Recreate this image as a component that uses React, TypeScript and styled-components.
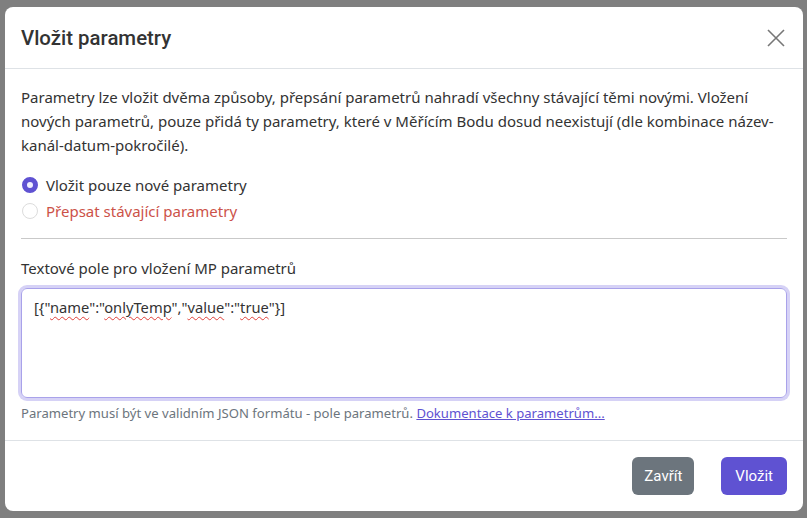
import React from 'react'
import styled, { createGlobalStyle } from 'styled-components'

const GlobalStyle = createGlobalStyle`
  html, body {
    margin: 0;
    padding: 0;
    height: 100%;
  }
  body {
    background: #808080;
    font-family: "Noto Sans", "Open Sans", sans-serif;
    color: #333;
  }
`

const Backdrop = styled.div`
  width: 807px;
  height: 518px;
  box-sizing: border-box;
  padding: 7px 4px 7px 5px;
  background: #7f7f7f;
`

const Modal = styled.div`
  height: 504px;
  box-sizing: border-box;
  background: #fff;
  border-radius: 8px;
  display: flex;
  flex-direction: column;
  overflow: hidden;
`

const Header = styled.div`
  height: 62px;
  box-sizing: border-box;
  display: flex;
  align-items: center;
  justify-content: space-between;
  padding: 0 14px 0 16px;
  border-bottom: 1px solid #dee2e6;
`

const Title = styled.h5`
  margin: 0;
  font-family: Roboto, "Noto Sans", sans-serif;
  font-size: 20.4px;
  font-weight: 500;
  color: #333;
`

const CloseButton = styled.button`
  border: none;
  background: transparent;
  padding: 4px;
  display: flex;
  cursor: pointer;
`

const Body = styled.div`
  padding: 16px 16px 0 16px;
  flex: 1;
`

const Intro = styled.p`
  margin: 0 0 15px 0;
  font-size: 15px;
  line-height: 24px;
  color: #333;
`

const RadioRow = styled.label<{ $danger?: boolean }>`
  display: flex;
  align-items: center;
  gap: 8px;
  height: 26px;
  font-size: 15px;
  color: ${p => (p.$danger ? '#cc5249' : '#333')};
  cursor: pointer;
`

const RadioDot = styled.span<{ $checked?: boolean }>`
  width: 16px;
  height: 16px;
  box-sizing: border-box;
  border-radius: 50%;
  margin-left: 1px;
  border: ${p => (p.$checked ? '5px solid #5f52d2' : '1px solid #dcdcdc')};
  background: ${p => (p.$checked ? '#f0efff' : '#fff')};
`

const Divider = styled.hr`
  border: none;
  border-top: 1px solid #c9c9c9;
  margin: 14px 0 17px 0;
`

const FieldLabel = styled.div`
  font-size: 15px;
  line-height: 24px;
  margin-bottom: 8px;
  color: #333;
`

const TextArea = styled.textarea`
  display: block;
  width: 100%;
  height: 110px;
  box-sizing: border-box;
  border: 1px solid #a9a2ea;
  border-radius: 6px;
  box-shadow: 0 0 0 3px #d6d2f6;
  padding: 8px 12px;
  font-family: "Noto Sans", sans-serif;
  font-size: 14.7px;
  color: #333;
  resize: vertical;
  outline: none;
`

const Squiggle = styled.span`
  text-decoration: underline wavy #e0403a;
  text-decoration-thickness: 1px;
  text-underline-offset: 3px;
`

const Help = styled.div`
  margin-top: 6px;
  font-size: 13.1px;
  color: #6c757d;
`

const HelpLink = styled.a`
  color: #5f52d2;
  text-decoration: underline;
`

const Footer = styled.div`
  height: 71px;
  box-sizing: border-box;
  border-top: 1px solid #dee2e6;
  display: flex;
  align-items: center;
  justify-content: flex-end;
  gap: 27px;
  padding: 0 16px 0 16px;
`

const Button = styled.button<{ $primary?: boolean }>`
  height: 38px;
  padding: 0 ${p => (p.$primary ? 14 : 12)}px;
  border: none;
  border-radius: 6px;
  font-family: Roboto, "Noto Sans", sans-serif;
  font-size: 15px;
  color: #fff;
  background: ${p => (p.$primary ? '#5f52d2' : '#6c757d')};
  cursor: pointer;
`

const App: React.FC = () => {
  return (
    <>
      <GlobalStyle />
      <Backdrop>
        <Modal>
          <Header>
            <Title>Vložit parametry</Title>
            <CloseButton aria-label="Zavřít">
              <svg width="18" height="18" viewBox="0 0 18 18">
                <path d="M1 1 L17 17 M17 1 L1 17" stroke="#777" strokeWidth="1.6" fill="none" />
              </svg>
            </CloseButton>
          </Header>
          <Body>
            <Intro>
              Parametry lze vložit dvěma způsoby, přepsání parametrů nahradí všechny stávající těmi novými. Vložení
              nových parametrů, pouze přidá ty parametry, které v Měřícím Bodu dosud neexistují (dle kombinace název-kanál-datum-pokročilé).
            </Intro>
            <RadioRow>
              <RadioDot $checked />
              Vložit pouze nové parametry
            </RadioRow>
            <RadioRow $danger>
              <RadioDot />
              Přepsat stávající parametry
            </RadioRow>
            <Divider />
            <FieldLabel>Textové pole pro vložení MP parametrů</FieldLabel>
            <TextArea as="div">
              [{'{'}"<Squiggle>name</Squiggle>":"<Squiggle>onlyTemp</Squiggle>","<Squiggle>value</Squiggle>":"<Squiggle>true</Squiggle>"{'}'}]
            </TextArea>
            <Help>
              Parametry musí být ve validním JSON formátu - pole parametrů. <HelpLink href="#">Dokumentace k parametrům...</HelpLink>
            </Help>
          </Body>
          <Footer>
            <Button>Zavřít</Button>
            <Button $primary>Vložit</Button>
          </Footer>
        </Modal>
      </Backdrop>
    </>
  )
}

export default App
